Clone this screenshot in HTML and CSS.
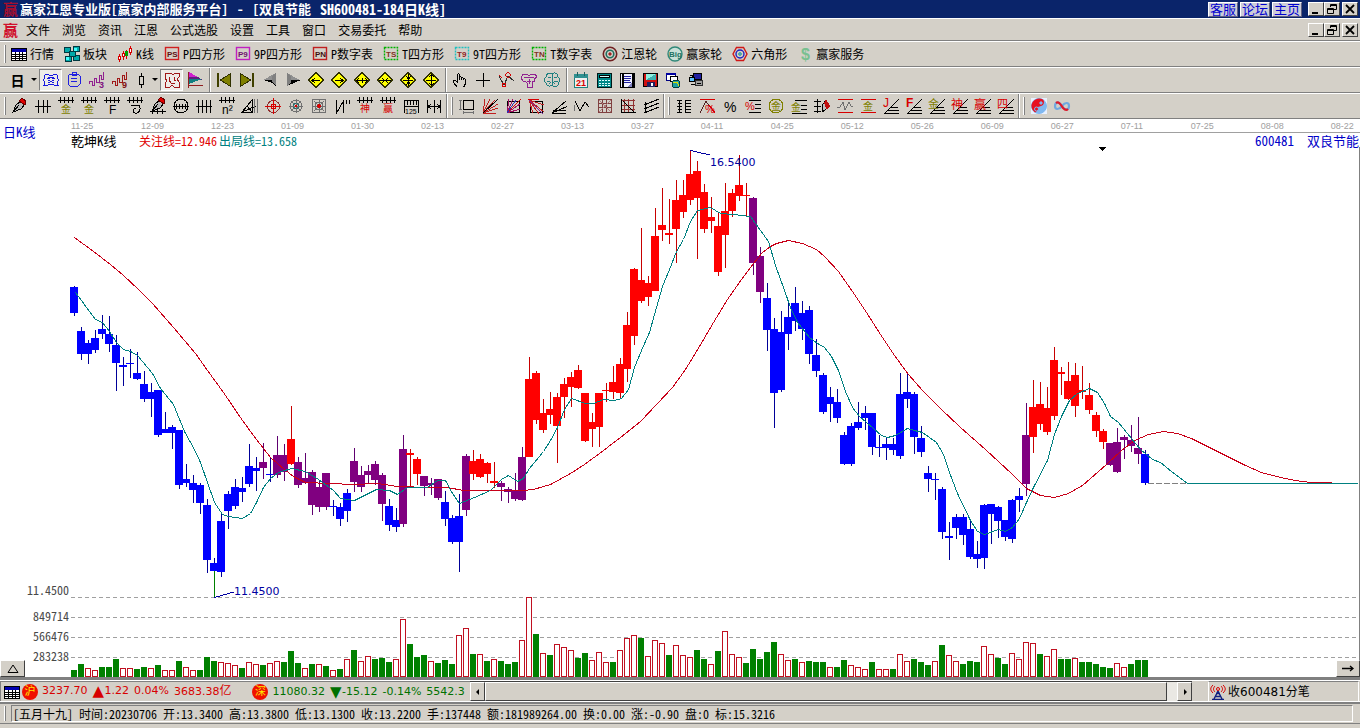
FILE: index.html
```html
<!DOCTYPE html>
<html lang="zh-CN">
<head>
<meta charset="utf-8">
<title>赢家江恩专业版</title>
<link rel="stylesheet" href="styles.css">
</head>
<body>
<header class="titlebar">
  <span class="logo">赢</span>
  <h1 class="title"><span>赢家江恩专业版[赢家内部服务平台]</span><span>-</span><span>[双良节能</span><span class="code">SH600481-184日K线]</span></h1>
  <nav class="links"><a href="#kf">客服</a><a href="#lt">论坛</a><a href="#zy">主页</a></nav>
  <div class="winbtns">
    <button class="win" data-icon="min" data-size="12" aria-label="最小化"></button><button class="win" data-icon="restore" data-size="12" aria-label="还原"></button><button class="win win-close" data-icon="close" data-size="12" aria-label="关闭"></button>
  </div>
</header>
<div class="menubar">
  <span class="logo">赢</span>
  <nav class="menu">
    <button>文件</button><button>浏览</button><button>资讯</button><button>江恩</button><button>公式选股</button><button>设置</button><button>工具</button><button>窗口</button><button>交易委托</button><button>帮助</button>
  </nav>
  <div class="winbtns">
    <button class="win" data-icon="min" data-size="12" aria-label="最小化窗口"></button><button class="win" data-icon="restore" data-size="12" aria-label="还原窗口"></button><button class="win win-close" data-icon="close" data-size="12" aria-label="关闭窗口"></button>
  </div>
</div>
<div class="bar bar-text">
  <i class="grip"></i>
  <button class="cmd" data-icon="table" data-size="16">行情</button>
  <button class="cmd" data-icon="blocks" data-size="16">板块</button>
  <button class="cmd" data-icon="kline" data-size="16">K线</button>
  <button class="cmd" data-icon="ps" data-size="16">P四方形</button>
  <button class="cmd" data-icon="p9" data-size="16">9P四方形</button>
  <button class="cmd" data-icon="pn" data-size="16">P数字表</button>
  <button class="cmd" data-icon="ts" data-size="16">T四方形</button>
  <button class="cmd" data-icon="t9" data-size="16">9T四方形</button>
  <button class="cmd" data-icon="tn" data-size="16">T数字表</button>
  <button class="cmd" data-icon="wheel" data-size="16">江恩轮</button>
  <button class="cmd" data-icon="big" data-size="16">赢家轮</button>
  <button class="cmd" data-icon="hex" data-size="16">六角形</button>
  <button class="cmd" data-icon="dollar" data-size="16">赢家服务</button>
</div>
<div class="bar bar-view">
  <button class="tool period">日</button><button class="drop" data-icon="down" data-size="6" aria-label="选择周期"></button>
  <button class="tool on" data-icon="robot" aria-label="智能"></button>
  <button class="tool" data-icon="clip" aria-label="剪贴板"></button>
  <button class="tool" data-icon="wave3" aria-label="三浪"></button>
  <button class="tool" data-icon="wave9" aria-label="九浪"></button>
  <button class="tool narrow" data-icon="candle" aria-label="K线样式"></button><button class="drop" data-icon="down" data-size="6" aria-label="选择样式"></button>
  <button class="tool on" data-icon="face" aria-label="乾坤"></button>
  <button class="tool" data-icon="flag" aria-label="旗"></button>
  <i class="sep"></i>
  <button class="tool" data-icon="first" aria-label="最前"></button>
  <button class="tool" data-icon="last" aria-label="最后"></button>
  <button class="tool" data-icon="prev" aria-label="向前"></button>
  <button class="tool" data-icon="next" aria-label="向后"></button>
  <button class="tool" data-icon="dleft" aria-label="左移"></button>
  <button class="tool" data-icon="dright" aria-label="右移"></button>
  <button class="tool" data-icon="dwide" aria-label="展宽"></button>
  <button class="tool" data-icon="dnarrow" aria-label="收窄"></button>
  <button class="tool" data-icon="dshrink" aria-label="缩小"></button>
  <button class="tool" data-icon="dgrow" aria-label="放大"></button>
  <i class="sep"></i>
  <button class="tool" data-icon="hand" aria-label="手形"></button>
  <button class="tool" data-icon="plus" aria-label="十字"></button>
  <button class="tool" data-icon="nodes" aria-label="节点"></button>
  <button class="tool" data-icon="scroll" aria-label="卷轴"></button>
  <button class="tool" data-icon="brain" aria-label="大脑"></button>
  <i class="sep"></i>
  <button class="tool" data-icon="calendar" aria-label="日历"></button>
  <button class="tool" data-icon="calc" aria-label="计算器"></button>
  <button class="tool" data-icon="note" aria-label="笔记"></button>
  <button class="tool" data-icon="disk" aria-label="保存"></button>
  <button class="tool" data-icon="net" aria-label="网络"></button>
  <button class="tool" data-icon="pc" aria-label="下载"></button>
</div>
<div class="bar bar-draw">
  <i class="grip"></i>
  <button class="tool" data-icon="pen" aria-label="画笔"></button>
  <button class="tool" data-icon="fence" aria-label="周期线"></button>
  <button class="tool" data-icon="fgold" aria-label="黄金周期"></button>
  <button class="tool" data-icon="fgold" aria-label="黄金周期二"></button>
  <button class="tool" data-icon="ff" aria-label="斐波周期"></button>
  <button class="tool" data-icon="fspiral" aria-label="螺旋"></button>
  <button class="tool" data-icon="penrule" aria-label="标尺笔"></button>
  <button class="tool" data-icon="circ" aria-label="圆周期"></button>
  <button class="tool" data-icon="fence4" aria-label="等分"></button>
  <button class="tool" data-icon="nsq" aria-label="平方"></button>
  <button class="tool" data-icon="tri" aria-label="三角"></button>
  <button class="tool" data-icon="target" aria-label="圆心"></button>
  <button class="tool" data-icon="starc" aria-label="星圆"></button>
  <button class="tool" data-icon="stars" aria-label="星方"></button>
  <button class="tool" data-icon="npp" aria-label="对称"></button>
  <button class="tool" data-icon="fshen" aria-label="神周期"></button>
  <button class="tool" data-icon="fying" aria-label="赢周期"></button>
  <button class="tool" data-icon="ruler" aria-label="标尺"></button>
  <button class="tool" data-icon="span" aria-label="间距"></button>
  <i class="split"></i>
  <button class="tool" data-icon="frame" aria-label="框"></button>
  <button class="tool" data-icon="fanred" aria-label="扇形线"></button>
  <button class="tool" data-icon="fanbox" aria-label="箱扇形"></button>
  <button class="tool" data-icon="fantop" aria-label="下扇形"></button>
  <button class="tool" data-icon="fan" aria-label="角度线"></button>
  <button class="tool" data-icon="zig" aria-label="折线"></button>
  <button class="tool" data-icon="grid" aria-label="网格"></button>
  <button class="tool" data-icon="gridb" aria-label="网格二"></button>
  <button class="tool" data-icon="chan" aria-label="通道"></button>
  <i class="split"></i>
  <button class="tool" data-icon="levels" aria-label="分档"></button>
  <button class="tool" data-icon="pcttop" aria-label="百分比顶"></button>
  <button class="tool" data-icon="pct" aria-label="百分比"></button>
  <button class="tool" data-icon="pctlev" aria-label="百分比线"></button>
  <button class="tool" data-icon="goldc" aria-label="黄金圆"></button>
  <button class="tool" data-icon="goldlev" aria-label="黄金线"></button>
  <button class="tool" data-icon="penlev" aria-label="价位笔"></button>
  <button class="tool" data-icon="wavelev" aria-label="波动区"></button>
  <button class="tool" data-icon="goldbox" aria-label="黄金区"></button>
  <button class="tool" data-icon="jfan" aria-label="J角度"></button>
  <button class="tool" data-icon="ffan" aria-label="F角度"></button>
  <button class="tool" data-icon="gfan" aria-label="金角度"></button>
  <button class="tool" data-icon="sfan" aria-label="神角度"></button>
  <button class="tool" data-icon="yfan" aria-label="赢角度"></button>
  <button class="tool" data-icon="fourfan" aria-label="四角度"></button>
  <i class="split"></i>
  <button class="tool smooth" data-icon="yinyang" aria-label="太极"></button>
  <button class="tool smooth" data-icon="inf" aria-label="无限"></button>
</div>
<main class="chart">
  <div class="chart-head">
    <div class="mode">日K线</div>
    <div class="head-main">
      <div class="dates" id="dates"></div>
      <div class="legend"><span class="l-name">乾坤K线</span><span class="l-red">关注线=12.946</span><span class="l-teal">出局线=13.658</span><span class="l-code">600481&nbsp; 双良节能</span></div>
    </div>
  </div>
  <svg class="plot" id="plot" viewBox="0 147 1360 530" role="img" aria-label="日K线图"></svg>
  <button class="corner corner-left" data-icon="up" data-size="14" aria-label="展开"></button>
  <button class="corner corner-right" data-icon="arrow" data-size="14" aria-label="右移"></button>
</main>
<footer class="foot">
  <div class="quotes">
    <div class="ticker">
      <span class="ticon" data-icon="table" data-size="16"></span>
      <span class="badge">沪</span>
      <span class="up"><span>3237.70</span><span class="move"><b>▲</b>1.22</span><span>0.04%</span><span>3683.38<span class="unit">亿</span></span></span>
      <span class="badge second">深</span>
      <span class="down"><span>11080.32</span><span class="move"><b>▼</b>-15.12</span><span>-0.14%</span><span>5542.3</span></span>
    </div>
    <div class="scroll">
      <button class="sbtn" data-icon="sleft" data-size="8" aria-label="向左滚动"></button>
      <div class="thumb"></div><div class="track"></div>
      <button class="sbtn" data-icon="sright" data-size="8" aria-label="向右滚动"></button>
    </div>
    <div class="recv"><span class="ticon" data-icon="antenna" data-size="16"></span><span>收600481分笔</span></div>
  </div>
  <div class="info">
    <i class="grip"></i>
    <p class="info-text">[五月十九] 时间:20230706 开:13.3400 高:13.3800 低:13.1300 收:13.2200 手:137448 额:181989264.00 换:0.00 涨:-0.90 盘:0 标:15.3216</p>
  </div>
</footer>
<script src="app.js"></script>
</body>
</html>
```
FILE: styles.css
```css
:root {
  --face: #d4d0c8;
  --shade: #808080;
  --dark: #404040;
  --navy: #0a246a;
  --song: "Noto Sans Mono CJK SC", "Noto Sans CJK SC", sans-serif;
  --verdana: "DejaVu Sans", "Noto Sans CJK SC", sans-serif;
}
* { box-sizing: border-box; }
body {
  margin: 0;
  min-height: 100vh;
  display: flex;
  flex-direction: column;
  background: var(--face);
  color: #000;
  font: 12px/16px var(--song);
  overflow: hidden;
}
button {
  margin: 0;
  padding: 0;
  border: 0;
  background: none;
  color: inherit;
  font: inherit;
  flex: none;
}
svg { display: block; }

/* title and menu */
.titlebar, .menubar { display: flex; align-items: center; }
.titlebar { height: 19px; background: var(--navy); border-bottom: 1px solid #fff; padding: 0 2px 0 3px; }
.logo { width: 16px; font: bold 15px/18px "Noto Sans CJK SC", sans-serif; color: #d0102c; }
.titlebar .logo { color: #a01030; }
.title {
  margin: 0 auto 0 1px;
  display: flex;
  gap: 9px;
  color: #fff;
  font: bold 13px/18px var(--song);
  white-space: nowrap;
}
.title .code { font-size: 14px; }
.links { display: flex; gap: 2px; margin-right: 6px; }
.links a {
  width: 30px;
  height: 15px;
  border: 1px solid;
  border-color: #fff #606080 #606080 #fff;
  background: #ccccd8;
  color: #0000d0;
  font-size: 13px;
  line-height: 12px;
  text-align: center;
  text-decoration: none;
}
.winbtns { display: flex; }
.win {
  width: 16px;
  height: 14px;
  display: grid;
  place-items: center;
  background: var(--face);
  border: 1px solid;
  border-color: #fff var(--dark) var(--dark) #fff;
}
.win-close { margin-left: 2px; }
.menubar { height: 22px; border-bottom: 1px solid var(--shade); padding: 0 2px 0 3px; }
.menu { display: flex; gap: 12px; margin: 0 auto 0 7px; }

/* toolbars */
.bar {
  display: flex;
  align-items: center;
  height: 26px;
  border-top: 1px solid #fff;
  border-bottom: 1px solid var(--shade);
}
.grip {
  flex: none;
  width: 2px;
  height: 18px;
  border-left: 1px solid #fff;
  border-right: 1px solid var(--shade);
  margin-left: 4px;
}
.bar-text .grip { margin-right: 5px; }
.bar-draw .grip { margin-right: 2px; }
.cmd { display: flex; align-items: center; gap: 3px; margin-right: 10px; }
.bar-view { padding-left: 6px; }
.tool { width: 23px; height: 22px; display: grid; place-items: center; }
.tool svg { overflow: visible; shape-rendering: crispEdges; }
.tool.smooth svg { shape-rendering: auto; }
.tool.narrow { width: 19px; }
.tool.on {
  border: 1px solid;
  border-color: var(--shade) #fff #fff var(--shade);
  background: #eeece8;
}
.period { font-size: 14px; font-weight: bold; }
.drop { width: 10px; height: 22px; display: grid; place-items: center; }
.sep { flex: none; width: 6px; height: 24px; background: linear-gradient(to right, var(--shade) 1px, #fff 1px 2px, transparent 2px) 3px 0 no-repeat; }
.split {
  flex: none;
  width: 10px;
  height: 24px;
  background:
    linear-gradient(to right, var(--shade) 1px, #fff 1px 2px, transparent 2px) 1px 0 no-repeat,
    linear-gradient(to right, #fff 1px, var(--shade) 1px 2px, transparent 2px) 6px 3px / 4px 18px no-repeat;
}

/* chart */
.chart { position: relative; background: #fff; border-bottom: 3px solid var(--shade); }
.chart-head { display: flex; height: 28px; }
.mode { width: 70px; padding: 5px 0 0 3px; color: #0000c8; font-size: 13px; }
.head-main { flex: 1; min-width: 0; }
.dates {
  display: flex;
  height: 14px;
  border-bottom: 1px solid #a0a0a0;
  overflow: hidden;
}
.dates span { flex: 0 0 5.147vw; padding-left: 1px; color: #a0a0a0; font: 9px/15px "Liberation Sans", sans-serif; }
.legend { display: flex; padding-left: 1px; line-height: 15px; white-space: nowrap; }
.l-name { font-size: 13px; width: 68px; }
.l-red { color: #e00000; width: 80px; }
.l-teal { color: #008080; }
.l-code { margin-left: auto; padding-right: 1px; color: #0000c8; font-size: 13px; }
.plot { width: 100%; height: auto; shape-rendering: crispEdges; }
.plot text { font: 12px var(--song); fill: #484848; }
.plot .mark { font: 11px var(--verdana); fill: #0000a0; }
.corner {
  position: absolute;
  bottom: 0;
  height: 17px;
  display: grid;
  place-items: center;
  background: var(--face);
  border: 1px solid;
  border-color: #fff var(--dark) var(--dark) #fff;
}
.corner-left { left: 0; width: 25px; }
.corner-right { right: 0; width: 24px; }

/* status rows */
.foot { flex: 1; }
.quotes { display: flex; height: 22px; border-top: 1px solid #fff; border-bottom: 1px solid #fff; }
.ticker {
  flex: 0 0 470px;
  display: flex;
  align-items: center;
  overflow: hidden;
  padding-left: 3px;
  border-top: 1px solid var(--shade);
  border-left: 1px solid var(--shade);
  font: 11px/18px var(--verdana);
  white-space: nowrap;
}
.badge {
  flex: none;
  width: 16px;
  height: 16px;
  margin: 0 4px 0 2px;
  border-radius: 50%;
  background: #f01000;
  color: #ffe800;
  font-size: 11px;
  line-height: 15px;
  text-align: center;
}
.badge.second { margin-left: 21px; }
.up, .down { display: flex; gap: 5px; }
.up { color: #d80000; }
.down { color: #007000; }
.move { display: flex; }
.move b { width: 12px; font-size: 15px; font-weight: normal; }
.unit { font-size: 12px; }
.scroll { flex: 1; display: flex; background: var(--face); border-top: 1px solid var(--dark); margin-right: 16px; }
.sbtn, .thumb { background: var(--face); border: 1px solid; border-color: #fff var(--dark) var(--dark) #fff; }
.sbtn { width: 15px; display: grid; place-items: center; }
.thumb { flex: 1; }
.track { width: 10px; background: #eae8e3; }
.recv {
  flex: 0 0 151px;
  display: flex;
  align-items: center;
  gap: 2px;
  padding-left: 1px;
  margin-right: 1px;
  border-left: 1px solid #fff;
  border-top: 1px solid var(--shade);
  border-right: 1px solid #fff;
  font: 12px/18px var(--verdana);
}
.info {
  display: flex;
  align-items: center;
  height: 22px;
  border-top: 2px solid var(--shade);
  border-bottom: 1px solid var(--shade);
}
.info .grip { height: 15px; }
.info-text {
  flex: 1;
  margin: 0 7px 0 5px;
  height: 17px;
  padding-left: 1px;
  border: 1px solid;
  border-color: var(--shade) #fff #fff var(--shade);
  line-height: 16px;
  white-space: pre;
}
```
FILE: app.js
```javascript
const line = (d, c = '#000', w = 1) => `<path d="${d}" fill="none" stroke="${c}" stroke-width="${w}"/>`;
const fill = (d, c) => `<path d="${d}" fill="${c}"/>`;
const rect = (x, y, w, h, f, s) => s
  ? `<rect x="${x + .5}" y="${y + .5}" width="${w - 1}" height="${h - 1}" fill="${f}" stroke="${s}"/>`
  : `<rect x="${x}" y="${y}" width="${w}" height="${h}" fill="${f}"/>`;
const ring = (x, y, r, c, f = 'none', w = 1) => `<circle cx="${x}" cy="${y}" r="${r}" fill="${f}" stroke="${c}" stroke-width="${w}"/>`;
const text = (s, x, y, size, c, b = 400) => `<text x="${x}" y="${y}" font-size="${size}" fill="${c}" font-weight="${b}" font-family="Liberation Sans, Noto Sans CJK SC, sans-serif">${s}</text>`;

const OLIVE = '#808000', RED = '#d80000', GRAY = '#707070';
const tag = (s, c, t, dash) => `<rect x="1.5" y="1.5" width="13" height="12" fill="none" stroke="${c}" stroke-width="1.4" ${dash ? 'stroke-dasharray="2 1"' : ''}/>` + text(s, 3, 11, 8, t, 700);
const diamond = d => `<path d="M9 1.5L16.5 9L9 16.5L1.5 9Z" fill="#ffff00" stroke="#303000"/>` + line(d);
const comb = (n, y = 5) => {
  let d = `M1 ${y}.5H17`;
  for (let i = 0; i < n; i++) d += `M${Math.round(3 + i * 12 / (n - 1)) + .5} ${y - 3}V${y + 3}`;
  return line(d);
};
const rays = 'M2 16L16 4M2 16L17 9.5M3 13.5H16M2 16.5H16';
const stepfan = line('M3 16L17 2M8 10.5H16M5 13.5H17M2 16.5H17');
const penTip = (x = 0, y = 0) => `<g transform="translate(${x} ${y})"><path d="M2 15L5 8L10 4L14 7L10 12Z" fill="#b8b8b8" stroke="#000"/><path d="M8 4L11 1L15 4L14 8Z" fill="#e00000" stroke="#600"/><path d="M3 14L8 8" stroke="#000"/></g>`;
const burst = 'M9 2V16M2 9H16M4 4L14 14M14 4L4 14';

const ICONS = {
  min: rect(2, 9, 6, 2, '#000'),
  restore: line('M4.5 4V1.5H10.5V6.5H8M4 2.5H11M1.5 5.5H7.5V10.5H1.5ZM2 6.5H8'),
  close: line('M2 2L10 10M10 2L2 10', '#000', 1.8),
  down: fill('M0 1H6L3 4Z', '#000'),
  up: line('M2 10.5H12L7 3Z'),
  arrow: line('M1 6.5H12M9 4L12 6.5L9 9', '#000', 1.3),
  sleft: fill('M5 1V7L2 4Z', '#000'),
  sright: fill('M3 1V7L6 4Z', '#000'),
  antenna: line('M8 7L4 15M8 7L12 15M2 15.5H14M5 12.5H11M6 9.5H10', '#102080', 1.4) + line('M5 2C3 4 3 6 5 8M11 2C13 4 13 6 11 8M3 1C0 4 0 6 3 9M13 1C16 4 16 6 13 9', RED) + ring(8, 5, 1.5, RED),
  table: rect(0, 2, 16, 13, '#fff', '#000') + rect(1, 3, 14, 3, '#0000b0') + line('M1 8.5H15M1 10.5H15M1 12.5H15M4.5 6V14M8.5 6V14M11.5 6V14'),
  blocks: [[0, 1], [9, 0], [1, 10], [9, 9], [5, 5]].map(p => rect(p[0], p[1], 7, 6, '#00a8a8', '#003840')).join('') + rect(10, 2, 3, 3, '#40ffff') + rect(2, 11, 3, 3, '#40ffff'),
  kline: line('M2.5 8V16M13.5 0V9', RED) + line('M6.5 5V14M9.5 4V13', RED) + rect(1, 10, 3, 4, '#fff', RED) + rect(5, 7, 3, 4, '#fff', RED) + rect(8, 5, 3, 5, '#00a000') + rect(12, 2, 3, 5, '#fff', RED),
  ps: tag('PS', '#d02020', '#601010'),
  p9: tag('P9', '#c020c0', '#701070'),
  pn: tag('PN', '#c02020', '#401010'),
  ts: tag('TS', '#00b000', '#803020', 1),
  t9: tag('T9', '#20c0c0', '#902020', 1),
  tn: tag('TN', '#00b000', '#803020', 1),
  wheel: ring(8, 8, 6.7, '#702020', '#d8d0c8', 1.6) + ring(8, 8, 3.8, '#207060', 'none', 1.6) + ring(8, 8, 1.2, '#a02020', '#a02020'),
  big: ring(8, 8, 7, '#308878', '#c8e0d8', 1.4) + text('Big', 2, 11, 8, '#207060', 700),
  hex: line('M4.5 1.5H11.5L15 8L11.5 14.5H4.5L1 8Z', '#d01818', 1.4) + ring(8, 8, 4, '#2020c0', 'none', 1.4) + ring(8, 8, 1.3, '#209090', '#80d0d0'),
  dollar: text('$', 4, 14, 16, '#78c090', 700),
  robot: line('M2 5L4 3L7 4H11L14 3L16 5L15 7L17 9L15 11L16 14H12L10 13H8L6 14H2L3 11L1 9L3 7ZM6 6H12M5 8L8 7M13 8L10 7M6 9L12 12M12 9L6 12', '#1818e0'),
  clip: line('M5 3H13L15 5V13L13 15H5L3 13V5ZM7 1.5H11V4.5H7ZM6 7.5H12M6 10.5H12', '#2020e0'),
  wave3: line('M1.5 13V10.5H4.5V14.5H6.5V7.5H8.5V11.5H11.5V4.5H13.5V8.5H15.5V1', '#902090') + text('3', 11, 17, 9, '#801080', 700),
  wave9: line('M1.5 13V10.5H4.5V14.5H6.5V7.5H8.5V11.5H11.5V4.5H13.5V8.5H15.5V1', '#a01818') + text('9', 11, 17, 9, '#801010', 700),
  candle: line('M9.5 2V5M9.5 14V17') + rect(7, 5, 5, 9, 'none', '#000'),
  face: line('M3 2H8L10 4L12 2H16V6L14 8L16 11V16H11L9 14L7 16H2V12L4 10L2 7ZM7 6L6 9L8 12L12 13M11 6V9H13', '#a01818'),
  flag: fill('M3 1L12 6L3 6Z', '#d020d0') + fill('M3 6H12L17 9H3Z', '#602080') + fill('M3 8H16L3 13Z', '#108080') + line('M2.5 1V17M2 14.5H17', '#902020'),
  first: rect(2, 2, 2, 14, '#404000') + `<path d="M15.5 2.5V15.5L5.5 9Z" fill="${OLIVE}" stroke="#303000"/>`,
  last: rect(14, 2, 2, 14, '#404000') + `<path d="M2.500 2.5V15.5L12.5 9Z" fill="${OLIVE}" stroke="#303000"/>`,
  prev: fill('M2 9L15 2V10Z', '#909090') + fill('M2 9H12L15 15L11 12Z', '#000') + fill('M11 5L15 2V15L11 11Z', '#808080'),
  next: fill('M3 2L16 9L7 10Z', '#909090') + fill('M6 9H17L3 15L7 11Z', '#000') + fill('M3 2L7 5V11L3 15Z', '#808080'),
  dleft: diamond('M5 9.5H13M8 7L5 9.5L8 12'),
  dright: diamond('M5 9.5H13M10 7L13 9.5L10 12'),
  dwide: diamond('M4 9.5H14M9.5 7V12M6 7L4 9.5L6 12M12 7L14 9.5L12 12'),
  dnarrow: diamond('M3 9.5H8M10 9.5H15M6 7L8 9.5L6 12M12 7L10 9.5L12 12'),
  dshrink: diamond('M4 9.5H14M9.5 3V15M7 5L9.5 8L12 5M7 14L9.5 11L12 14'),
  dgrow: diamond('M4 9.5H14M9.5 3V15M7 6L9.500 3.5L12 6M7 12L9.5 14.5L12 12'),
  hand: line('M6.5 16.5L2.5 11.5V9.5H4.5L6.5 11.5V3.5L7.5 2.5L8.5 3.5V9M8.5 6.5L9.5 5.5L10.5 6.5V9M10.5 7.5L11.5 6.5L12.5 7.5V9M12.5 8.5L13.5 7.5L14.5 8.5V12.5L12.5 16.5'),
  plus: line('M9.5 2V16M2 9.5H16'),
  nodes: line('M2 5L7 14L11 5L17 10', '#303030') + ring(7, 14, 2, RED) + ring(11, 4, 2.2, RED) + line('M2 4L5 7', RED),
  scroll: line('M3 3H7L9 5L11 3H15L17 6L14 8V10H12V16H7V12L5 10H3L1 7ZM4 6H14M9 8V13M7 10H11', '#902090'),
  brain: line('M9 3C6 1 3 3 3 6C0 8 1 11 3 12C3 15 7 16 9 14C12 17 16 15 15 12C18 10 17 7 15 6C15 2 11 1 9 3V15M5 6H8M4 10H7M11 6H14M11 10H15M6 13L8 11M12 13L10 11', '#208080'),
  calendar: rect(2, 4, 14, 13, '#f0f0f0', '#208080') + rect(2, 3, 14, 4, '#309090') + line('M5.5 1V5M12.5 1V5', '#206060') + text('21', 4, 15, 9, RED, 700),
  calc: rect(2, 2, 15, 15, '#008888', '#001818') + rect(4, 4, 11, 3, '#d0ffff', '#000') + [9, 12, 14].map(y => [4, 7, 10, 13].map(x => rect(x, y, 2, 1, '#e0ffff')).join('')).join(''),
  note: rect(2, 2, 15, 15, '#f0f0ff', '#000') + rect(14, 2, 3, 15, '#000') + line('M6 5.5H13M6 7.5H13M6 9.5H12M6 11.5H13', '#2020a0') + line('M4.5 3V16', '#000', 2) + fill('M9 16L14 11V16Z', '#8080c0'),
  disk: rect(2, 2, 15, 14, '#d01010', '#000') + rect(5, 3, 10, 6, '#90f0e0') + fill('M5 9L15 3V9Z', '#40b0b0') + rect(6, 11, 8, 5, '#202060') + rect(10, 12, 2, 3, '#fff'),
  net: rect(2, 2, 10, 8, '#fff', '#000080') + rect(2, 2, 10, 2, '#0000a0') + rect(6, 5, 8, 6, '#fff', '#000') + ring(12, 13, 4, '#004040', '#20a0a0') + line('M9 12L13 11L15 15', '#e0e000'),
  pc: rect(6, 2, 9, 7, '#2020a0', '#000') + rect(2, 6, 6, 5, '#60c0ff', '#000') + rect(8, 9, 8, 6, '#a0a0a0', '#303030') + line('M4 13.5H8M10 12.5H14M3 4H5V7'),
  pen: penTip(),
  fence: line('M1 9.5H17M4.5 3V16M9.5 3V16M13.5 3V16'),
  fence4: line('M1 9.5H17M3.5 3V16M7.5 3V16M11.5 3V16M15.5 3V16'),
  fgold: comb(4, 3) + text('金', 4, 16, 10, OLIVE),
  ff: comb(4, 3) + text('F', 6, 17, 12, '#000'),
  fspiral: comb(4, 3) + line('M5 8.500H13C16 13 12 17 9 16C6 15 7 11 10 12'),
  penrule: penTip(1, -1) + line('M1 14.5H17M3.5 12V17M8.5 12V17M13.5 12V17'),
  circ: ring(9, 9, 7, '#000') + line('M1 9.5H17M4.5 7V12M7.5 7V12M10.5 7V12M13.5 7V12'),
  nsq: comb(4, 3) + text('n²', 4, 17, 12, '#000'),
  tri: line('M1 15L11 3V15ZM6 9L11 15M1 15L15 9') + line('M13.5 2V16M16.5 2V16', GRAY),
  target: ring(9.5, 9.5, 6, '#903030') + line('M9.5 1V17M1 9.5H17', RED) + ring(9.5, 9.5, 2.5, RED),
  starc: ring(9, 9, 6, GRAY) + ring(9, 9, 3, '#207070') + line(burst, GRAY) + ring(9, 9, 1, RED, RED),
  stars: rect(2, 2, 14, 14, 'none', GRAY) + rect(5, 5, 8, 8, 'none', GRAY) + line(burst, GRAY) + ring(9, 9, 1.3, RED, RED),
  npp: line('M3.5 3V16L10.5 4V16M13.5 3V7M16.5 3V7'),
  fshen: comb(4, 3) + text('神', 4, 15, 10, RED),
  fying: comb(4, 3) + text('赢', 4, 15, 10, RED),
  ruler: line('M2 3.5H17M2.5 3V16M5.5 3V8M8.5 3V8M11.5 3V8M14.5 3V8M16.5 3V16M2 9.5H17') + text('125', 3, 17, 7, '#000'),
  span: line('M2.5 3V16M9.5 3V16M15.5 3V16M3 9.5H15M6 7L3 9.5L6 12M12 7L15 9.5L12 12'),
  frame: rect(5, 3, 11, 10, 'none', '#000') + line('M2.5 3V13M1 3.5H4M1 12.5H4M5 15.5H16M5.5 14V17M15.5 14V17', GRAY),
  fanred: line('M2 16L4 2M2 16L9 2M2 16L14 3M2 16L17 7M2 16L17 11M2 16H15', '#c02020') + line('M2 16L17 2'),
  fanbox: rect(3, 4, 13, 12, 'none', '#000') + line('M3 16L5 2M3 16L9 2M3 16L16 7M3 16L16 12', '#a01060') + line('M3 16L17 2', RED) + line('M3 16L12 3', '#3030b0'),
  fantop: rect(3, 4, 13, 12, 'none', '#000') + line('M2 3L17 8M2 3L17 15M2 3L12 17M2 3L6 16', '#c02020') + line('M2 3L16 17', '#8020a0') + line('M1 2.5H12', RED),
  fan: line(rays),
  zig: line('M2 4L7 14L12 5L16 10') + line('M1.5 8V14', GRAY),
  grid: line('M2.5 2V16M6.5 2V16M10.5 2V16M15.5 2V16M2 2.5H16M2 6.5H16M2 10.5H16M2 15.5H16', '#804040') + line('M3 3L15 15M15 3L3 15', '#b08080'),
  gridb: line('M5.5 2V16M9.5 2V16M14.5 2V16M3 3.5H16M3 8.5H16M3 12.5H16', '#903030') + line('M3 15.5H17M2.5 2V16M4 4L16 16'),
  chan: line('M2 8L17 2M2 12L17 6M2 16L17 10M3.5 5V16'),
  levels: line('M2 3.5H7M10 3.5H16M3 6.5H7M10 6.5H16M2 9.5H7M10 9.5H16M3 12.5H7M10 12.5H16M2 15.5H7M10 15.5H16M4.5 3V16M10.5 3V16'),
  pcttop: line('M2 2.5H17M11 8L17 16', RED) + line('M2 16L8 4L11 9', '#502020') + text('%', 7, 16, 11, RED),
  pct: text('%', 3, 15, 14, '#000'),
  pctlev: line('M5 3.5H17M11 7.5H17M11 11.5H17M5 15.5H17') + text('%', 1, 13, 11, RED),
  goldc: ring(9, 9, 7, OLIVE) + text('金', 4, 13, 10, OLIVE),
  goldlev: line('M5 3.5H17M11 8.5H17M11 12.5H17M2 16.5H17') + text('金', 1, 14, 10, OLIVE),
  penlev: line('M4.5 2V16M1 4.5H8M1 9.5H8M1 14.5H8') + `<g transform="translate(4 1)"><path d="M5 14L5 8L8 3L12 9Z" fill="#c0c0c0" stroke="#000"/><path d="M7 5L9 1L13 8L10 12Z" fill="#c01010"/></g>`,
  wavelev: line('M2 2.5H17M2 15.5H17', RED) + line('M1 10H4L7 5L9 13L13 5L15 9H17', GRAY),
  goldbox: line('M2 2.5H17M2 15.5H17', RED) + text('金', 4, 13, 10, OLIVE),
  jfan: stepfan + text('J', 1, 10, 12, RED),
  ffan: stepfan + text('F', 1, 10, 12, RED, 700),
  gfan: stepfan + text('金', 0, 11, 11, OLIVE),
  sfan: stepfan + text('神', 0, 12, 12, RED),
  yfan: stepfan + text('赢', 0, 12, 12, RED),
  fourfan: stepfan + text('四', 0, 11, 11, RED),
  yinyang: rect(1, 1, 16, 16, '#e8f0ff') + ring(9, 9, 7.5, '#80b8f0', '#80b8f0') + fill('M13 2.6A7.5 7.5 0 1 0 5 15.4C9 14 6 10 9.500 9.5C14 9 15 5 13 2.600Z', '#e81020') + ring(11, 6, 1.2, '#80b8f0', '#80b8f0') + ring(6.5, 12, 2, '#80b8f0', '#e81020'),
  inf: line('M9 9C6 4 2 5 2 9C2 13 6 13 9 9C12 5 16 5 16 9C16 13 12 14 9 9', '#70a8e0', 2.2) + line('M3 6C6 4 8 8 10 11C12 13 14 13 15 12', '#e01828', 2.2)
};

document.querySelectorAll('[data-icon]').forEach(el => {
  const size = +(el.dataset.size || 18);
  el.insertAdjacentHTML('afterbegin',
    `<svg width="${size}" height="${size}" viewBox="0 0 ${size} ${size}" aria-hidden="true">${ICONS[el.dataset.icon]}</svg>`);
});

document.getElementById('dates').innerHTML =
  '11-25 12-09 12-23 01-09 01-30 02-13 02-27 03-13 03-27 04-11 04-25 05-12 05-26 06-09 06-27 07-11 07-25 08-08 08-22'
    .split(' ').map(d => `<span>${d}</span>`).join('');

/* Each bar: colour, high, body top, body bottom, low */
const BARS = `b286,287,313,316 b327,331,354,360 b340,343,354,364 b330,338,350,353 b315,329,334,339 b316,334,344,352 b335,345,363,391 b357,365,367,386 b349,363,364,378 b352,373,379,380
b371,384,399,402 b383,392,399,417 b390,390,435,437 b412,429,433,433 b425,427,433,449 b430,430,485,489 b464,479,483,487 b475,483,490,503 b483,485,503,514 b499,505,560,573
b558,563,571,573 b514,521,572,577 b491,494,511,529 b479,487,506,509 b477,488,492,502 b444,466,484,487 b457,468,471,491 p443,462,468,479 b458,474,475,482 p436,455,475,478
p444,455,472,481 r406,439,464,465 p457,462,485,488 p453,478,483,484 p470,472,505,515 p480,487,507,512 p473,473,507,510 b500,506,507,516 b503,507,519,526 b489,493,511,522
p448,461,482,492 p466,475,487,492 p465,471,475,484 p461,464,480,485 p473,475,504,521 b499,506,525,531 b508,520,527,532 p435,449,524,527 r449,453,455,486 r457,459,474,485
p476,476,486,496 p478,483,485,495 p479,479,498,500 b491,502,519,526 b515,518,542,544 b494,516,542,572 p454,456,510,516 r450,461,474,480 r454,459,477,478 r462,463,474,483
r462,481,483,488 p481,483,487,501 p487,489,492,503 p473,490,499,501 p447,457,500,501 r357,379,457,457 r371,373,420,424 r399,413,430,433 r392,409,415,424 r393,397,426,463
r378,384,397,418 r372,377,387,407 r365,370,388,389 r393,393,441,442 r413,422,429,447 r393,393,427,447 r383,390,391,402 r366,382,392,399 r358,364,393,398 r312,325,369,382
r268,269,336,345 r228,280,301,303 r276,283,297,306 r208,236,291,291 r188,225,230,241 r199,233,235,244 r180,200,229,263 r180,195,212,218 r150,174,200,205 r161,171,198,259
r184,192,229,233 r197,217,221,233 r212,226,272,276 r183,211,235,268 r189,193,211,217 r155,185,196,201 r183,195,196,216 p197,198,263,275 p247,256,292,303 b283,298,330,351
b318,329,393,428 b311,332,390,392 b303,317,334,350 b287,303,321,331 b301,313,329,340 b306,310,354,364 b339,355,371,377 b373,375,412,414 b387,397,404,422 b389,402,418,423
b432,435,464,465 b423,426,464,466 b402,422,428,430 b406,413,418,430 b413,413,447,455 b435,447,448,457 b437,444,448,460 b438,444,450,455 b373,394,456,459 b373,392,399,408
b392,394,437,454 b426,438,452,457 b466,473,479,492 b473,479,480,500 b487,489,532,539 b522,536,538,560 b514,517,528,539 b514,517,535,545 b521,529,557,559 b541,554,559,568
b504,505,558,569 b504,504,514,544 b506,507,521,538 b520,520,537,541 b499,500,539,543 b488,496,500,512 p403,435,484,496 r380,407,437,453 r382,404,424,430 r387,408,432,435
r347,360,416,420 r367,372,374,395 r362,381,399,400 r363,375,406,417 r366,390,392,399 r383,395,410,414 r412,415,431,437 r429,431,442,449 p443,443,465,466 p428,442,472,473
p435,437,440,459 p425,440,446,452 p417,448,454,464 b450,454,483,485`.split(/\s+/);

/* Volume: g = falling (solid), r = rising (hollow), then height */
const VOLUME = `g7 g13 r9 r7 g10 g10 g18 r9 r9 g8 g10 r9 g12 r7 r7 g16 r10 r7 g7 g20 g16 r15 r14 r12 g9 r15 r13 g12 r14 r16 g15 g26 g14 r9 g13 r13 g11 r7 g8 r18
g27 r16 r21 g18 g19 g15 r18 r58 g33 g20 g22 r16 g14 g17 g13 r42 r49 g23 r23 g16 r18 g16 g13 g15 r37 r80 g43 r24 g22 r33 r30 r27 g19 g24 r17 r25 r15 g15 r27 r39
r42 g39 r21 r37 r34 g22 r32 r22 r20 g27 g18 r13 g26 r46 r23 r20 g14 g28 g18 g25 g35 r23 r17 g18 r15 g16 g15 g15 r10 g10 g17 r12 r10 r8 g15 r8 r8 g8 r23 r16
g18 g15 g12 r16 g32 r22 r16 g13 g16 g15 r31 r23 g19 g13 r24 r18 r35 r34 g23 r21 r28 g18 g18 r19 g15 g15 g13 g10 g9 r14 r10 g13 g17 g17`.split(/\s+/);

const EXIT_LINE = '75,292 95,319 102,322 109,331 116,342 123,349 130,351 137,355 152,373 160,388 173,404 184,431 194,449 200,462 207,482 214,502 222,514 228,516 242,518 250,513 256,502 263,487 270,478 278,472 291,468 305,471 318,479 333,490 340,498 354,500 366,494 376,489 389,490 397,494 407,487 427,487 437,480 445,480 452,493 459,503 474,497 490,490 501,479 508,475 517,481 523,478 529,468 543,451 550,440 557,427 564,409 571,398 585,403 593,403 603,399 614,400 621,398 628,389 634,367 641,350 649,332 656,307 662,286 669,269 676,251 683,239 690,221 697,210 710,207 720,213 733,214 750,216 755,223 768,241 775,265 783,287 790,307 797,322 809,337 817,343 824,347 831,356 838,370 845,391 852,407 859,416 873,428 881,435 887,437 895,435 907,428 914,430 922,432 936,442 943,454 949,472 957,493 970,520 977,531 984,534 998,529 1005,531 1012,527 1019,518 1026,502 1033,487 1047,460 1054,434 1061,416 1069,400 1077,393 1089,388 1097,392 1104,403 1110,416 1118,422 1131,438 1140,449 1152,459 1160,462 1171,471 1187,483';
const WATCH_LINE = '74,237 93,251 110,264 123,275 138,289 152,303 173,327 195,353 207,370 223,392 242,420 256,439 270,457 284,469 293,476 305,482 330,483 353,484 377,483 397,486 430,487 447,487 463,490 497,490 523,490 533,489 550,484 570,473 584,464 599,453 620,437 640,421 657,403 672,387 685,369 699,346 713,322 727,299 741,279 753,263 762,252 770,246 776,243 788,240 802,243 816,249 824,256 838,271 852,291 866,312 880,334 894,355 908,374 922,390 940,408 960,427 985,449 1012,474 1026,488 1040,495 1054,497 1068,493 1082,485 1106,464 1121,450 1134,440 1148,434 1163,431 1177,433 1191,438 1205,445 1225,455 1245,465 1261,472 1280,477 1295,480 1310,482 1331,482';

const COLOURS = { b: '#0000ff', p: '#800080', r: '#ff0000' };
const WICKS = { b: '#000098', p: '#600070', r: '#c80000' };
const FIRST = 74, STEP = 7, BASE = 677;
let out = '';

[[597, 591, '11.4500'], [617, 617, '849714'], [637, 637, '566476'], [657, 657, '283238']].forEach(([y, ty, label]) => {
  out += `<path d="M71 ${y}.5H1358" stroke="#a0a0a0" stroke-dasharray="4 3"/><text x="69" y="${ty + 4}" text-anchor="end">${label}</text>`;
});
VOLUME.forEach((v, i) => {
  const h = +v.slice(1), x = FIRST + i * STEP - 3;
  out += v[0] === 'g' ? rect(x, BASE - h, 6, h, '#008000') : rect(x, BASE - h, 6, h, '#fff', '#c01020');
});
BARS.forEach((bar, i) => {
  const key = bar[0], [hi, top, bottom, lo] = bar.slice(1).split(',').map(Number), x = FIRST + i * STEP;
  out += rect(x, hi, 1, lo - hi, WICKS[key]) + rect(x - 4, top, 8, bottom - top, COLOURS[key]);
});
out += rect(214, 571, 1, 26, '#008000') + line('M214.5 597.5L234 592', '#0000a0') + line('M690.5 150.5L710 155', '#0000a0');
out += '<path d="M1148 483.5H1187" stroke="#808080" stroke-dasharray="6 2"/>' + rect(1187, 483, 171, 1, '#008080');
out += `<g transform="translate(.5 .5)" fill="none"><polyline points="${WATCH_LINE}" stroke="#c80018"/><polyline points="${EXIT_LINE}" stroke="#008080"/></g>`;
out += '<text class="mark" x="234" y="595">11.4500</text><text class="mark" x="710" y="166">16.5400</text>';
out += fill('M1098 147H1107L1102.500 151Z', '#000') + rect(1359, 147, 1, 530, '#808080');
document.getElementById('plot').innerHTML = out;
```
